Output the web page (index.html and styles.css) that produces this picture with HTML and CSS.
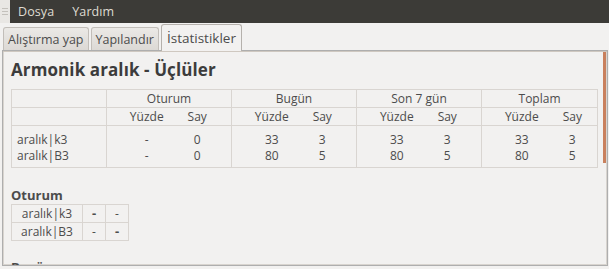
FILE: index.html
```html
<!DOCTYPE html>
<html>
<head>
<meta charset="utf-8">
<link rel="stylesheet" href="styles.css">
</head>
<body>
<div class="topbar">
  <div class="grip"><span></span><span></span><span></span></div>
  <div class="menubar">
    <span class="menu-item">Dosya</span>
    <span class="menu-item">Yardım</span>
  </div>
</div>
<div class="tabs">
  <div class="tab">Alıştırma yap</div>
  <div class="tab">Yapılandır</div>
  <div class="tab active">İstatistikler</div>
</div>
<div class="frame">
  <div class="scroll-thumb"></div>
  <div class="content">
    <h1 class="title">Armonik aralık - Üçlüler</h1>
    <table class="stats">
      <colgroup>
        <col class="c-label">
        <col class="c-pct"><col class="c-say">
        <col class="c-pct"><col class="c-say">
        <col class="c-pct"><col class="c-say">
        <col class="c-pct"><col class="c-say-last">
      </colgroup>
      <thead>
        <tr class="group-row">
          <th class="label"></th>
          <th colspan="2" class="grp">Oturum</th>
          <th colspan="2" class="grp">Bugün</th>
          <th colspan="2" class="grp">Son 7 gün</th>
          <th colspan="2" class="grp">Toplam</th>
        </tr>
        <tr class="sub-row">
          <th class="label"></th>
          <th class="pct grp-start">Yüzde</th><th class="say">Say</th>
          <th class="pct grp-start">Yüzde</th><th class="say">Say</th>
          <th class="pct grp-start">Yüzde</th><th class="say">Say</th>
          <th class="pct grp-start">Yüzde</th><th class="say last">Say</th>
        </tr>
      </thead>
      <tbody>
        <tr>
          <td class="label">aralık|k3</td>
          <td class="pct grp-start">-</td><td class="say">0</td>
          <td class="pct grp-start">33</td><td class="say">3</td>
          <td class="pct grp-start">33</td><td class="say">3</td>
          <td class="pct grp-start">33</td><td class="say last">3</td>
        </tr>
        <tr>
          <td class="label">aralık|B3</td>
          <td class="pct grp-start">-</td><td class="say">0</td>
          <td class="pct grp-start">80</td><td class="say">5</td>
          <td class="pct grp-start">80</td><td class="say">5</td>
          <td class="pct grp-start">80</td><td class="say last">5</td>
        </tr>
      </tbody>
    </table>

    <h2 class="section">Oturum</h2>
    <table class="matrix">
      <tr><td class="m-label">aralık|k3</td><td class="m-cell strong">-</td><td class="m-cell">-</td></tr>
      <tr><td class="m-label">aralık|B3</td><td class="m-cell">-</td><td class="m-cell strong">-</td></tr>
    </table>

    <h2 class="section section-next">Bugün</h2>
  </div>
</div>
</body>
</html>
```
FILE: styles.css
```css
html, body {
  margin: 0;
  padding: 0;
}
body {
  width: 609px;
  height: 269px;
  overflow: hidden;
  background: #f2f1f0;
  font-family: "Open Sans", "Noto Sans", sans-serif;
  color: #4c4c4c;
}

/* menu bar */
.topbar {
  display: flex;
  height: 23px;
}
.grip {
  width: 10px;
  background: #e9e7e4;
  display: flex;
  flex-direction: column;
  justify-content: center;
  align-items: center;
  gap: 2px;
}
.grip span {
  display: block;
  width: 6px;
  height: 1px;
  background: #c4c1bc;
}
.menubar {
  flex: 1;
  background: #3c3b37;
  display: flex;
  align-items: center;
  padding-left: 8px;
  gap: 18px;
}
.menu-item {
  color: #dfdbd2;
  font-size: 12.5px;
  letter-spacing: 0.1px;
}

/* tabs */
.tabs {
  display: flex;
  align-items: flex-end;
  height: 27px;
  padding-left: 3px;
  gap: 2px;
  position: relative;
  z-index: 1;
}
.tab {
  box-sizing: border-box;
  height: 23px;
  padding: 0 4px;
  border: 1px solid #c2beb9;
  border-bottom: none;
  border-radius: 3px 3px 0 0;
  background: linear-gradient(#ebe9e6, #dcd9d5);
  font-size: 12.5px;
  color: #4c4c4c;
  display: flex;
  align-items: center;
}
.tab.active {
  height: 27px;
  margin-bottom: -1px;
  background: #f2f1f0;
  border-color: #b5b1ac;
  padding: 0 5px;
  font-size: 13.5px;
  align-items: center;
}

/* frame */
.frame {
  position: relative;
  box-sizing: border-box;
  margin: 0 1px 0 2px;
  height: 216px;
  border: 1px solid #aeaeae;
  box-shadow: inset 0 1px 0 #cfc8c0, inset 1px 0 0 #d8d4cf, inset -1px 0 0 #d8d4cf, inset 0 -1px 0 #d8d4cf;
  overflow: hidden;
}
.scroll-thumb {
  position: absolute;
  right: 1px;
  top: 1px;
  width: 3px;
  height: 111px;
  background: #c9805d;
}
.content {
  padding: 8px 0 0 8px;
}
.title {
  margin: 0 0 8px 0;
  font-size: 17px;
  font-weight: bold;
  color: #3c3c3c;
  line-height: 22px;
  letter-spacing: 0.1px;
}

/* stats table */
.stats {
  border-collapse: collapse;
  table-layout: fixed;
  width: 586px;
  font-size: 12px;
  color: #4c4c4c;
  border: 1px solid #d9d5d1;
}
.c-label { width: 95px; }
.c-pct { width: 80px; }
.c-say { width: 45px; }
.c-say-last { width: 36px; }
.stats th {
  font-weight: normal;
  height: 17px;
  padding: 0;
  line-height: 17px;
}
.group-row th {
  border-bottom: 1px solid #d9d5d1;
  text-align: center;
}
.group-row th.grp {
  border-left: 1px solid #d9d5d1;
}
.sub-row th {
  border-bottom: 1px solid #d9d5d1;
}
.stats .pct {
  text-align: center;
}
.stats .say {
  text-align: center;
  padding-right: 23px;
}
.stats .say.last {
  padding-right: 14px;
}
.stats .grp-start {
  border-left: 1px solid #d9d5d1;
}
.stats td {
  padding: 0;
  height: 16px;
  line-height: 16px;
}
.stats tbody tr:first-child td {
  padding-top: 6px;
}
.stats tbody tr:last-child td {
  padding-bottom: 3px;
}
.stats td.label {
  padding-left: 5px;
  text-align: left;
}

/* sections */
.section {
  margin: 19px 0 0 0;
  font-size: 13px;
  font-weight: bold;
  color: #4c4c4c;
  line-height: 17px;
}
.section-next {
  margin-top: 18px;
}
.matrix {
  border-collapse: collapse;
  font-size: 12px;
  color: #4c4c4c;
  border: 1px solid #d9d5d1;
}
.matrix td {
  border: 1px solid #d9d5d1;
  height: 17px;
  padding: 0;
  line-height: 17px;
  text-align: center;
}
.m-label {
  width: 70px;
}
.m-cell {
  width: 22px;
}
.m-cell.strong {
  font-weight: bold;
  font-size: 13px;
}
```
